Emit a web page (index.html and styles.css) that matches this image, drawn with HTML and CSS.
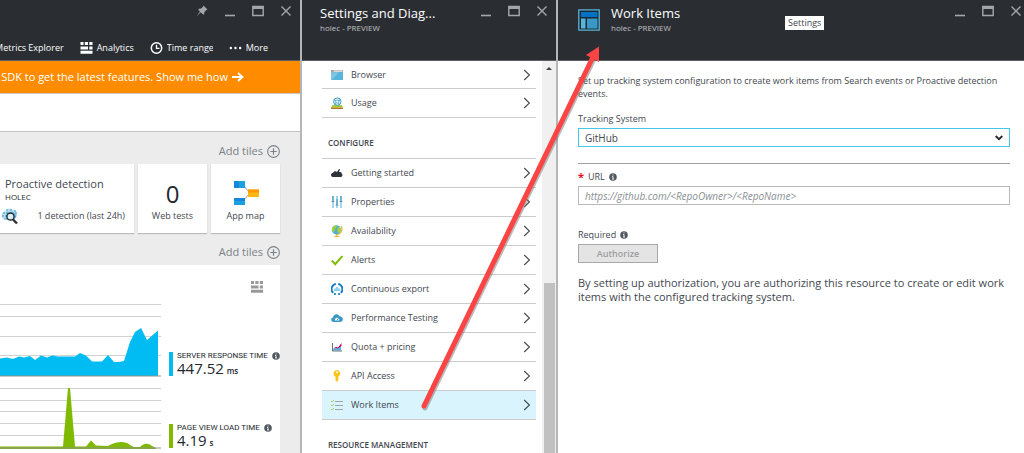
FILE: index.html
```html
<!DOCTYPE html>
<html lang="en">
<head>
<meta charset="utf-8">
<meta name="viewport" content="width=device-width, initial-scale=1">
<title>Work Items</title>
<link rel="stylesheet" href="styles.css">
</head>
<body>
<svg class="defs" aria-hidden="true">
  <symbol id="min" viewBox="0 0 12 12"><path d="M1 10.5h10" stroke="currentColor" stroke-width="1.6"/></symbol>
  <symbol id="max" viewBox="0 0 12 12"><path d="M.8 1.5h10.4v9H.8z" fill="none" stroke="currentColor" stroke-width="1.4"/><path d="M.5 1h11v3H.5z" fill="currentColor"/></symbol>
  <symbol id="close" viewBox="0 0 12 12"><path d="M1.5 1.5l9 9M10.5 1.5l-9 9" stroke="currentColor" stroke-width="1.4"/></symbol>
  <symbol id="plus" viewBox="0 0 12 12"><circle cx="6" cy="6" r="5.4" fill="none" stroke="currentColor"/><path d="M3 6h6M6 3v6" stroke="currentColor" stroke-width="1.1"/></symbol>
  <symbol id="info" viewBox="0 0 8 8"><circle cx="4" cy="4" r="3.8" fill="#505860"/><path d="M4 1.4v1.1M3.2 3.5H4v2.4M3.1 6h1.9" stroke="#fff" stroke-width=".9" fill="none"/></symbol>
  <symbol id="chev" viewBox="0 0 8 12"><path d="M1.2 1l5.2 5-5.2 5" fill="none" stroke="#444b52" stroke-width="1.1"/></symbol>
  <symbol id="blocks" viewBox="0 0 12 12"><path d="M0 0h3v3H0zM4.300 0h3.200v3H4.300zM8.800 0H12v3H8.800zM0 4.400h7.500v3H0zM8.800 4.400H12v3H8.800zM0 8.800h12v3H0z" fill="currentColor"/></symbol>
</svg>

<div class="portal">
  <section class="blade overview">
    <header class="head">
      <div class="window">
        <button aria-label="Pin"><svg viewBox="0 0 12 12"><path d="M7.400.5l4.100 4.100-1.100.3-2 2.100-.2 2.300-1.100.3-2.400-2.400L.5 11.500 4 6.500 2.200 4.700l.8-1 2.200-.2 2-2z" fill="currentColor"/></svg></button>
        <button aria-label="Minimize"><svg><use href="#min"/></svg></button>
        <button aria-label="Maximize"><svg><use href="#max"/></svg></button>
        <button aria-label="Close"><svg><use href="#close"/></svg></button>
      </div>
      <nav class="tools">
        <button>Metrics Explorer</button>
        <button><svg><use href="#blocks"/></svg>Analytics</button>
        <button class="range"><svg viewBox="0 0 12 12"><circle cx="6" cy="6" r="5.200" fill="none" stroke="#fff" stroke-width="1.500"/><path d="M6 2.800v3.500h3" fill="none" stroke="#fff" stroke-width="1.300"/></svg><span>Time range</span></button>
        <button class="more"><svg viewBox="0 0 14 12"><g fill="#fff"><circle cx="2" cy="6" r="1.300"/><circle cx="7" cy="6" r="1.300"/><circle cx="12" cy="6" r="1.300"/></g></svg>More</button>
      </nav>
    </header>
    <a class="banner" href="#">Update your Application Insights SDK to get the latest features. Show me how <svg viewBox="0 0 12 10"><path d="M0 5h10M6 1l4.500 4L6 9" fill="none" stroke="#fff" stroke-width="1.800"/></svg></a>
    <div class="spacer"></div>
    <div class="board">
      <button class="add">Add tiles <svg><use href="#plus"/></svg></button>
      <div class="tiles">
        <article class="tile detect">
          <h2>Proactive detection</h2>
          <h3>HOLEC</h3>
          <p><svg viewBox="0 0 18 18"><path d="M1 10C0 6 3 4 5 4c1-3 5-3 7-1 3 0 5 3 4 6-1 3-4 3-6 3H4C2 12 1 11 1 10z" fill="#b5dcef"/><path d="M2 6h14M1 9h15M3 12h11M6 2v11M10 2v10M14 3v8" stroke="#3aa3d3" stroke-dasharray="2 1"/><circle cx="9.500" cy="9.500" r="3.600" fill="#d9eff8" stroke="#2b3036" stroke-width="1.500"/><path d="M12 12.500l4 4" stroke="#2b3036" stroke-width="2.400"/></svg><span>1 detection (last 24h)</span></p>
        </article>
        <article class="tile"><strong>0</strong><span>Web tests</span></article>
        <article class="tile">
          <svg viewBox="0 0 26 26"><path d="M9 4l8 9-8 9" fill="none" stroke="#9a9a9a"/><path d="M1 1h11v7H1zM1 18h11v7H1z" fill="#1ba1e2"/><path d="M1 1h5v7H1zM1 18h11v3H1z" fill="#1687d9"/><path d="M15 9.500h11v7.500H15z" fill="#fcb713"/><path d="M15 9.500h11v3H15z" fill="#ff9800"/></svg>
          <span>App map</span>
        </article>
      </div>
      <button class="add">Add tiles <svg><use href="#plus"/></svg></button>
      <div class="charts">
        <svg class="edit"><use href="#blocks"/></svg>
        <svg class="plot" viewBox="0 0 161 78">
          <path d="M0 4.500h161M0 16.500h161M0 36.500h161M0 55.500h161" stroke="#d2d2d2"/>
          <path d="M0 76V58.500l7-1 6 1.500 6-2.500 5 1 6-1.500 5 4 6-4.500 6 2 5-2 6 1h17l5-3.500 6 2.500 6 6h10l6-6.500 6 7h5l5-1 6-19 5-10 6-4 6 12 11-9.500V76z" fill="#00bcf2"/>
          <path d="M0 76h161" stroke="#909090"/>
        </svg>
        <div class="metric"><b>SERVER RESPONSE TIME <svg><use href="#info"/></svg></b><p>447.52 <small>ms</small></p></div>
        <svg class="plot" viewBox="0 0 161 66">
          <path d="M0 4.500h161M0 16.500h161M0 27.500h161M0 39.500h161M0 51.500h161" stroke="#d2d2d2"/>
          <path d="M0 62.500h63L68 4h2l5 58.500h11l5-6 5 5 12 .5c8-4 16-6 22-1l4 2h6c4-4 8-4 12-1l4 2v1H0z" fill="#7fba00"/>
          <path d="M0 64h161" stroke="#909090"/>
        </svg>
        <div class="metric page"><b>PAGE VIEW LOAD TIME <svg><use href="#info"/></svg></b><p>4.19 <small>s</small></p></div>
      </div>
    </div>
  </section>

  <section class="blade settings">
    <header class="head">
      <div class="title"><h1>Settings and Diag...</h1><p>holec - PREVIEW</p></div>
      <div class="window">
        <button aria-label="Minimize"><svg><use href="#min"/></svg></button>
        <button aria-label="Maximize"><svg><use href="#max"/></svg></button>
        <button aria-label="Close"><svg><use href="#close"/></svg></button>
      </div>
    </header>
    <div class="scroller">
      <nav class="menu">
        <a href="#"><svg viewBox="0 0 12 12"><path d="M0 1h12v10H0z" fill="#59b4d9"/><path d="M0 1h12v2.200H0z" fill="#a0a1a2"/><path d="M2.500 1.600h9v1h-9z" fill="#fff"/><path d="M0 3.200h8L1 11H0z" fill="#7cc4e2"/></svg><span>Browser</span><svg class="chev"><use href="#chev"/></svg></a>
        <a href="#"><svg viewBox="0 0 12 12"><path d="M1.500 8h9l1.500 2.500H0z" fill="#a4cf2f"/><path d="M0 10.500h12V12H0z" fill="#b3762b"/><circle cx="6.300" cy="4.600" r="3.700" fill="#e4f4fb" stroke="#3999c6"/><path d="M3.500 3l5 4M9 2.800L4 6.500" stroke="#3999c6"/><circle cx="6.300" cy="4.600" r="1.500" fill="#fff" stroke="#59b4d9"/></svg><span>Usage</span><svg class="chev"><use href="#chev"/></svg></a>
        <h2>CONFIGURE</h2>
        <a href="#"><svg viewBox="0 0 12 12"><path d="M0 8c0-1.500 1-2 2-2 .5-2 3-2.500 4-1l2-3 1 .5-1 2.500h2c.6.200.5 1 .3 1.200 1.500.3 1.700 3.500-.3 3.800H2C.8 10 0 9 0 8z" fill="#30353b"/></svg><span>Getting started</span><svg class="chev"><use href="#chev"/></svg></a>
        <a href="#"><svg viewBox="0 0 12 12"><path d="M2 0v12M6 0v12M10 0v12" stroke="#9bd3ea" stroke-width="1.800"/><path d="M2 0v5M6 3v6M10 0v5" stroke="#4a9fc4" stroke-width="1.200"/><path d="M.6 5.500h2.800M4.600 9h2.800M8.600 5.500h2.800" stroke="#7a858e" stroke-width="1.200"/></svg><span>Properties</span><svg class="chev"><use href="#chev"/></svg></a>
        <a href="#"><svg viewBox="0 0 12 12"><path d="M10 1c2.500 4-.5 9-5.500 8.600M6 9.500V12M3.500 11.500h5" stroke="#e8b52b" stroke-width="1.200" fill="none"/><circle cx="5.300" cy="4.800" r="4.500" fill="#4bafd8"/><path d="M1.500 2.500C3 .5 5 .2 6 .6L5 3 3.500 4 4 6 2.500 7C1 6 .5 4 1.500 2.500zM6.500 3l2-1.300c1.300 1.500 1.500 3 1 4.300L7.500 8.500 6 6z" fill="#a6cf3a"/></svg><span>Availability</span><svg class="chev"><use href="#chev"/></svg></a>
        <a href="#"><svg viewBox="0 0 12 12"><path d="M.8 6.300l3.400 3.900L11.300 2" fill="none" stroke="#7fba00" stroke-width="1.900"/></svg><span>Alerts</span><svg class="chev"><use href="#chev"/></svg></a>
        <a href="#"><svg viewBox="0 0 12 12"><path d="M4.800.8a5.300 5.300 0 0 0-2.600 9M7.200.8a5.300 5.300 0 0 1 2.600 9M3 10.900l1.800.4M7.200 11.300l1.800-.4" fill="none" stroke="#1279c4" stroke-width="1.900"/><path d="M4 8V5.500M6 8V4M8 8V5.500" stroke="#49b5e8" stroke-width="1.300"/></svg><span>Continuous export</span><svg class="chev"><use href="#chev"/></svg></a>
        <a href="#"><svg viewBox="0 0 12 12"><path d="M2.600 10C-.5 9.800-.4 6 2 5.600 2 1.800 7 .8 8.600 4.200c3.800.2 4.500 5.200.8 5.800z" fill="#3999c6"/><path d="M4 8.500a2.200 2.200 0 1 1 4.200 0z" fill="#fff"/><path d="M5.800 8.300l1.800-2" stroke="#3999c6"/></svg><span>Performance Testing</span><svg class="chev"><use href="#chev"/></svg></a>
        <a href="#"><svg viewBox="0 0 12 12"><path d="M2 9.500V8l3-1.500 2 .5 3-2v4.500z" fill="#59b4d9"/><path d="M2 7.500L5 6l2 .5L10.500 2v3L7 7.500 5 7z" fill="#d6006c"/><path d="M1.500 2v8H11" fill="none" stroke="#6c737a"/></svg><span>Quota + pricing</span><svg class="chev"><use href="#chev"/></svg></a>
        <a href="#"><svg viewBox="0 0 12 12"><path d="M6 0a3.600 3.600 0 0 1 1.300 6.800V10L6 12l-1.500-1.400V6.800A3.600 3.600 0 0 1 6 0z" fill="#fcc419"/><circle cx="6" cy="2.300" r="1" fill="#fff"/></svg><span>API Access</span><svg class="chev"><use href="#chev"/></svg></a>
        <a href="#" class="current"><svg viewBox="0 0 12 12"><path d="M4 2.500h8M4 6.500h8M4 10.500h8" stroke="#a0a6aa"/><path d="M0 2l1 1 2-2M0 6l1 1 2-2M0 10l1 1 2-2" fill="none" stroke="#a3c95c" stroke-width=".9"/></svg><span>Work Items</span><svg class="chev"><use href="#chev"/></svg></a>
        <h2 class="last">RESOURCE MANAGEMENT</h2>
      </nav>
      <div class="bar"><i></i><b></b></div>
    </div>
  </section>

  <section class="blade work">
    <header class="head">
      <svg class="logo" viewBox="0 0 22 22"><path d="M.8.800h20.400v20.400H.8z" fill="#1d2a33" stroke="#59b4d9" stroke-width="1.300"/><path d="M3 3h16.500v5H3z" fill="#0072c6"/><path d="M3 9.500h4.500v10H3z" fill="#59b4d9"/><path d="M9 9.500h10.500v10H9z" fill="#3999c6"/></svg>
      <div class="title"><h1>Work Items</h1><p>holec - PREVIEW</p></div>
      <span class="tip" role="tooltip">Settings</span>
      <div class="window">
        <button aria-label="Minimize"><svg><use href="#min"/></svg></button>
        <button aria-label="Maximize"><svg><use href="#max"/></svg></button>
        <button aria-label="Close"><svg><use href="#close"/></svg></button>
      </div>
    </header>
    <form class="form">
      <p class="intro">Set up tracking system configuration to create work items from Search events or Proactive detection events.</p>
      <label for="system">Tracking System</label>
      <div class="pick">
        <select id="system"><option>GitHub</option></select>
        <svg viewBox="0 0 8 6"><path d="M.7 1L4 4.200 7.300 1" fill="none" stroke="#22272c" stroke-width="1.800"/></svg>
      </div>
      <hr>
      <label for="url" class="url"><em>*</em>URL <svg><use href="#info"/></svg></label>
      <input id="url" type="text" placeholder="https://github.com/&lt;RepoOwner&gt;/&lt;RepoName&gt;">
      <label for="auth" class="req">Required <svg><use href="#info"/></svg></label>
      <button id="auth" type="button" disabled>Authorize</button>
      <p class="note">By setting up authorization, you are authorizing this resource to create or edit work items with the configured tracking system.</p>
    </form>
  </section>
</div>

<svg class="arrow" viewBox="0 0 190 372" aria-hidden="true">
  <path d="M10 366L178 19" stroke="#777" stroke-opacity=".5" stroke-width="5" stroke-linecap="round"/>
  <path d="M9 364L177 17" stroke="#fb4444" stroke-width="5" stroke-linecap="round"/>
  <path d="M184 4.500v15.500l-13-7z" fill="#fb4444"/>
</svg>
</body>
</html>
```
FILE: styles.css
```css
* { box-sizing: border-box; margin: 0; }
body { font: 11px/14px "Open Sans", "Noto Sans", sans-serif; color: #3f474f; background: #fff; overflow: hidden; }
button, input, select { font: inherit; color: inherit; }
button { border: 0; padding: 0; background: none; }
a { color: inherit; text-decoration: none; }
svg { flex: none; }
.defs { position: absolute; width: 0; height: 0; }
.portal { display: grid; grid-template-columns: 302px 256px 1fr; height: 100vh; }
.blade { display: flex; flex-direction: column; min-width: 0; overflow: hidden; border-right: 2px solid #b4b6b8; }
.blade.work { border-right: 0; }
.head { flex: none; display: flex; height: 61px; background: #2a2e33; color: #fff; margin-right: -2px; border-right: 2px solid #474c51; border-bottom: 1px solid #5b5f63; }
.work .head { margin-right: 0; border-right: 0; }
.window { display: flex; height: 22px; margin-left: auto; color: #a4a7aa; }
.window button { width: 28px; display: grid; place-items: center; }
.window svg { width: 12px; height: 12px; }
.title { padding-top: 5px; }
h1 { font-size: 13px; line-height: 16px; font-weight: 400; white-space: nowrap; }
.title p { font-size: 8px; line-height: 14px; color: #c0c2c4; }

.overview .head { flex-direction: column; justify-content: space-between; }
.tools { display: flex; justify-content: flex-end; align-items: center; gap: 16px; padding: 0 32px 5px 0; font-size: 9px; white-space: nowrap; }
.tools button { display: flex; align-items: center; gap: 4px; }
.tools svg { width: 13px; height: 12px; }
.range span { width: 46px; overflow: hidden; }
.banner { flex: none; display: flex; justify-content: flex-end; align-items: center; gap: 4px; height: 33px; padding-right: 56px; background: #ff8c00; color: #fff; border-bottom: 1px solid #c9c9c9; white-space: nowrap; }
.banner svg { width: 12px; height: 10px; }
.spacer { flex: none; height: 38px; border-bottom: 1px solid #c2c2c2; }
.board { flex: 1; display: flex; flex-direction: column; background: #ececec; padding: 9px 20px 0 0; }
.add { align-self: flex-end; display: flex; align-items: center; gap: 4px; height: 20px; color: #7b8187; }
.add svg { width: 13px; height: 13px; }
.tiles { display: grid; grid-template-columns: 1fr 69px 69px; gap: 4px; margin: 3px 0 9px; }
.tile { display: flex; flex-direction: column; align-items: center; justify-content: flex-end; height: 69px; padding-bottom: 10px; background: #fff; box-shadow: 0 1px 1px #bbb; font-size: 9px; }
.tile strong { font-size: 24px; line-height: 30px; font-weight: 400; color: #23282d; }
.tile > svg { width: 26px; height: 26px; margin-bottom: 3px; }
.detect { align-items: stretch; padding: 0 9px 8px 5px; }
.detect h2 { font-size: 11px; font-weight: 400; }
.detect h3 { font-size: 8px; line-height: 12px; font-weight: 400; color: #23282d; }
.detect p { display: flex; align-items: center; justify-content: space-between; margin: 4px 0 0 -4px; }
.detect svg { width: 18px; height: 18px; }
.charts { flex: 1; display: grid; grid-template-columns: 161px 1fr; grid-template-rows: 35px 84px 1fr; column-gap: 8px; background: #fff; margin-top: 3px; }
.edit { grid-column: 1 / -1; justify-self: end; width: 12px; height: 12px; margin: 16px 17px 0 0; color: #999; }
.plot { width: 100%; align-self: start; }
.metric { align-self: start; margin-top: 52px; border-left: 4px solid #00bcf2; padding-left: 4px; height: 24px; white-space: nowrap; color: #23282d; }
.metric.page { margin-top: 40px; border-color: #7fba00; }
.metric b { display: flex; align-items: center; gap: 4px; font: 400 8px/8px Roboto, sans-serif; }
.metric svg { width: 8px; height: 8px; }
.metric p { font-size: 15px; line-height: 17px; }
.metric small { font-size: 8px; font-weight: 600; margin-left: -1px; }

.settings .title { padding-left: 18px; }
.scroller { flex: 1; min-height: 0; display: flex; }
.menu { flex: 1; padding: 0 6px 0 20px; font-size: 9px; min-width: 0; }
.menu a { display: flex; align-items: center; height: 29px; padding: 0 5px 0 9px; border-bottom: 1px solid #ccc; }
.menu a:first-child { height: 28px; }
.menu a svg { width: 12px; height: 12px; margin-right: 8px; }
.menu a .chev { width: 8px; margin: 0 0 0 auto; }
.menu h2 { height: 41px; padding: 18px 0 0 6px; font-size: 8px; font-weight: 600; border-bottom: 1px solid #ccc; }
.menu .last { border: 0; }
.menu .current { background: #d9f4fd; }
.bar { width: 14px; background: #f0f0f0; display: flex; flex-direction: column; align-items: center; justify-content: space-between; padding-top: 6px; }
.bar i { border: 3px solid transparent; border-top: 0; border-bottom-color: #444; }
.bar b { width: 11px; height: 44%; background: #c1c1c1; }

.logo { width: 22px; height: 22px; margin: 9px 11px 0 20px; }
.work .window { margin-right: -6px; }
.work .head { overflow: hidden; position: relative; }
.tip { position: absolute; left: 227px; top: 16px; padding: 0 3px; background: #fff; color: #3f474f; font-size: 9px; line-height: 14px; }
.form { display: flex; flex-direction: column; align-items: stretch; padding: 13px 14px 0 20px; font-size: 9px; }
.intro { line-height: 13px; }
.form label { display: flex; align-items: center; gap: 4px; margin-top: 11px; line-height: 16px; }
.form label svg { width: 8px; height: 8px; }
.pick { display: grid; align-items: center; margin-top: 1px; }
.pick > * { grid-area: 1 / 1; }
.pick select { appearance: none; width: 100%; height: 19px; padding: 0 6px; font-size: 10px; border: 1px solid #45c7ea; border-radius: 0; background: #fff; }
.pick svg { justify-self: end; width: 8px; height: 6px; margin-right: 7px; }
hr { border: 0; border-top: 1px solid #a0a0a0; margin-top: 16px; }
.form .url { margin-top: 5px; }
.url em { color: #e81123; font-size: 11px; font-style: normal; font-weight: 700; }
.form input { width: 100%; height: 19px; margin-top: 1px; padding: 0 6px; font-size: 10px; border: 1px solid #b8b8b8; font-style: italic; }
.form input::placeholder { color: #8a8f94; opacity: 1; }
.form .req { margin-top: 22px; }
.form button { align-self: flex-start; width: 80px; height: 19px; margin-top: 1px; background: #e4e4e4; border: 1px solid #a8a8a8; color: #9a9da0; font-weight: 600; }
.note { margin-top: 13px; font-size: 11px; line-height: 14px; }

.arrow { position: absolute; left: 415px; top: 42px; width: 190px; height: 372px; pointer-events: none; }
```
